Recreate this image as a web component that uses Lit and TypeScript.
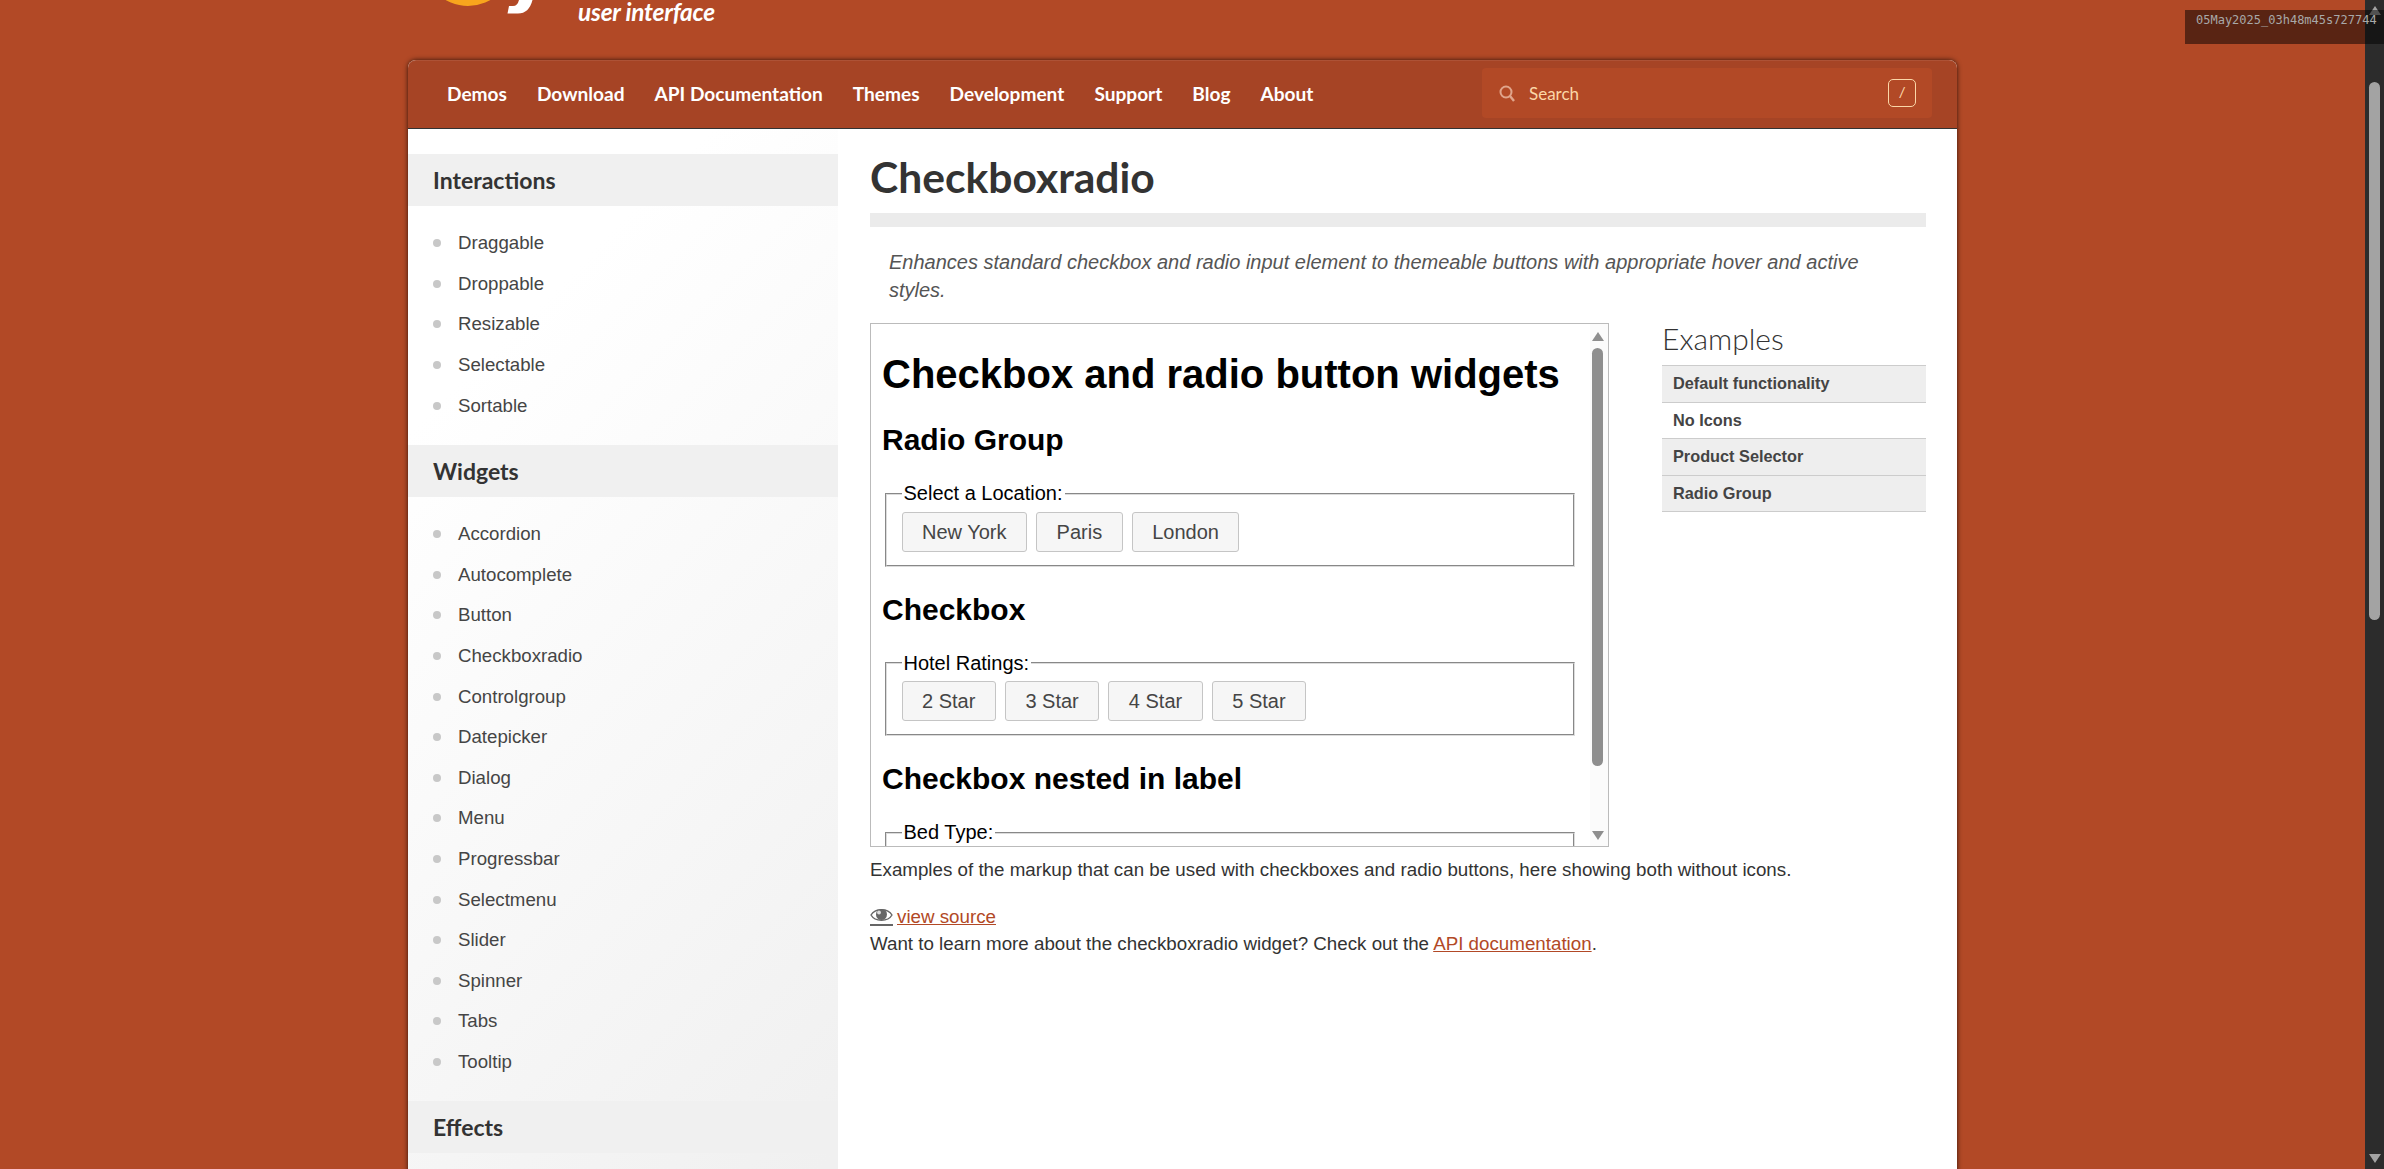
import { LitElement, html, css, svg } from "lit";
import { customElement } from "lit/decorators.js";

const NAV = ["Demos", "Download", "API Documentation", "Themes", "Development", "Support", "Blog", "About"];
const INTERACTIONS = ["Draggable", "Droppable", "Resizable", "Selectable", "Sortable"];
const WIDGETS = ["Accordion", "Autocomplete", "Button", "Checkboxradio", "Controlgroup", "Datepicker", "Dialog", "Menu", "Progressbar", "Selectmenu", "Slider", "Spinner", "Tabs", "Tooltip"];
const EXAMPLES = ["Default functionality", "No Icons", "Product Selector", "Radio Group"];

@customElement("app-root")
export class AppRoot extends LitElement {
  static styles = css`
    :host { display: block; height: 100vh; overflow: hidden; position: relative; background: #b24926; font-family: "Liberation Sans", Arial, sans-serif; }
    .shell { display: flex; height: 100vh; }
    .page { flex: 1; min-width: 0; height: 100vh; overflow: hidden; }
    .bar { width: 19px; flex: none; background: #2c2c2c; display: flex; flex-direction: column; align-items: center; }
    .thumb { width: 11px; height: 538px; margin-top: 67px; background: #a3a3a3; border-radius: 6px; }
    .arrow { width: 0; height: 0; border-left: 6.5px solid transparent; border-right: 6.5px solid transparent; }
    .arrow.up { border-bottom: 9px solid #a3a3a3; margin-top: 6px; }
    .arrow.down { border-top: 9px solid #a3a3a3; margin-top: auto; margin-bottom: 6px; }
    .stamp { position: absolute; left: 2185px; top: 10px; width: 199px; height: 34px; box-sizing: border-box; padding: 3px 0 0 11px; background: rgba(0,0,0,.5); color: #a8a8a8; font: 12px/15px "DejaVu Sans Mono", monospace; white-space: nowrap; overflow: hidden; }
    .logo { width: 1549px; height: 60px; margin: 0 auto; position: relative; overflow: hidden; }
    .logo svg { position: absolute; left: 0; top: 0; }
    .tag { position: absolute; left: 170px; top: 1px; color: #fff; font: italic 700 24.4px/21px "Lato", sans-serif; white-space: nowrap; letter-spacing: -.2px; }
    .wrap { width: 1549px; margin: 0 auto; box-shadow: 0 0 5px rgba(0,0,0,.75); border-radius: 8px 8px 0 0; background: #fff; height: 1200px; }
    nav { height: 68px; background: #a64425; border-radius: 8px 8px 0 0; border-bottom: 1px solid #333; display: flex; align-items: center; justify-content: space-between; padding: 0 25px 0 39px; box-shadow: inset 0 1px 0 rgba(255,255,255,.08); }
    .links { display: flex; gap: 30px; }
    .links a { color: #fff; font: 700 19.1px/24px "Lato", sans-serif; text-decoration: none; white-space: nowrap; }
    .search { width: 450px; height: 50px; margin-bottom: 2px; box-sizing: border-box; background: #b24926; border-radius: 4px; display: flex; align-items: center; padding: 0 16px; gap: 13px; color: #fbd7a8; font: 17px "Lato", sans-serif; }
    .search span.t { flex: 1; }
    .key { width: 28px; height: 28px; box-sizing: border-box; border: 1px solid #fbd7a8; border-radius: 5px; display: flex; align-items: center; justify-content: center; font: italic 14px "Liberation Sans", sans-serif; }
    .body { display: flex; }
    aside.side { width: 430px; flex: none; height: 1100px; padding-top: 25px; box-sizing: border-box; background: linear-gradient(135deg, #fff 20%, #f0f0f0 95%); }
    .side h2 { margin: 0; height: 52px; background: #f0f0f0; color: #333; padding-left: 25px; font: 700 23px/52px "Lato", sans-serif; }
    .side ul { list-style: none; margin: 0; padding: 17px 0 19px 25px; }
    .side li { display: flex; align-items: center; gap: 17px; height: 40.6px; color: #454545; font-size: 18.67px; }
    .side li::before { content: ""; width: 8px; height: 8px; border-radius: 50%; background: #c8c8c8; }
    main { width: 1056px; margin-left: 32px; }
    h1.title { margin: 0; height: 84px; border-bottom: 14px solid #ebebeb; color: #333; font: 700 42.6px/96px "Lato", sans-serif; }
    .desc { margin: 21px 0 19px; padding: 0 40px 0 19px; color: #555; font-style: italic; font-size: 20px; line-height: 28px; }
    .examples { float: right; width: 264px; }
    .examples h3 { margin: 0; height: 42px; color: #333; font: 300 30px/31px "Lato", sans-serif; }
    .examples a { display: block; padding: 0 0 0 11px; height: 35.5px; line-height: 35px; border-top: 1px solid #ccc; color: #444; font-weight: 700; font-size: 16.3px; background: #eee; text-decoration: none; }
    .examples a.plain { background: #fff; }
    .examples a:last-child { border-bottom: 1px solid #ccc; }
    .frame { width: 737px; height: 522px; border: 1px solid #bbb; display: flex; overflow: hidden; background: #fff; }
    .doc { flex: 1; min-width: 0; padding: 0 10px 0 11px; color: #000; font-size: 20px; overflow: hidden; }
    .doc h1 { font-size: 40px; line-height: 46px; margin: 27px 0 0; }
    .doc h2 { font-size: 30px; line-height: 34px; margin: 26px 0 0; }
    .doc fieldset { margin: 25px 5px 0 3px; padding: 6.5px 14.5px 13px; border: 2px groove #dcdcdc; min-inline-size: auto; }
    .doc fieldset.clip { height: 60px; }
    .doc legend { padding: 0 2px; line-height: 23px; }
    .doc .btn { display: inline-block; box-sizing: border-box; height: 40px; line-height: 38px; padding: 0 19.5px; margin-right: 3.5px; background: #f6f6f6; border: 1px solid #c5c5c5; border-radius: 3px; color: #454545; }
    .sb { width: 15px; padding-right: 3px; flex: none; background: #fbfbfb; display: flex; flex-direction: column; align-items: center; }
    .sb .thumb2 { width: 11px; height: 418px; margin-top: 7px; background: #8e8e8e; border-radius: 6px; }
    .sb .arrow.up { border-bottom-color: #8e8e8e; margin-top: 8px; }
    .sb .arrow.down { border-top-color: #8e8e8e; margin-bottom: 6px; }
    .note { margin: 12px 0 0; color: #333; font-size: 18.75px; line-height: 21px; }
    .note a, .src a, .learn a { color: #b24926; }
    .src { margin: 23.5px 0 0; color: #333; font-size: 18.75px; line-height: 26px; display: flex; align-items: center; gap: 4px; }
    .src svg { flex: none; }
    .learn { margin: 0.5px 0 0; color: #333; font-size: 18.75px; line-height: 28px; }
  `;

  private eye() {
    return html`<svg width="23" height="20" viewBox="0 0 23 20" aria-hidden="true">
      ${svg`<path d="M1 8C5 1 18 1 22 8C18 15 5 15 1 8Z" fill="#fff" stroke="#666" stroke-width="1.4"/>
      <circle cx="11.5" cy="7.5" r="5.5" fill="#666"/><circle cx="9" cy="5.5" r="1.9" fill="#ddd"/>
      <rect x="0" y="17" width="23" height="2" fill="#666"/>`}
    </svg>`;
  }

  private field(legend: string, items: string[], clip = false) {
    return html`<fieldset class=${clip ? "clip" : ""}><legend>${legend}</legend>${items.map((t) => html`<span class="btn">${t}</span> `)}</fieldset>`;
  }

  render() {
    return html`
      <div class="shell">
        <div class="page">
          <div class="logo">
            <svg width="160" height="30" viewBox="0 0 160 30" aria-hidden="true">
              ${svg`<circle cx="60" cy="-39" r="45" fill="#f8a51d"/>
              <path d="M111 0L124.5 0Q121 13.5 110 13.5L99.5 13.5L101 6L105 6Q109.5 6 111 0Z" fill="#fff"/>`}
            </svg>
            <span class="tag">user interface</span>
          </div>
          <div class="wrap">
            <nav>
              <div class="links">${NAV.map((n) => html`<a href="#">${n}</a>`)}</div>
              <div class="search">
                <svg width="18" height="18" viewBox="0 0 18 18" aria-hidden="true">
                  ${svg`<circle cx="8" cy="8" r="5.5" fill="none" stroke="#e0a58c" stroke-width="2"/><path d="M12 12l4 5" stroke="#e0a58c" stroke-width="2.4"/>`}
                </svg>
                <span class="t">Search</span>
                <span class="key">/</span>
              </div>
            </nav>
            <div class="body">
              <aside class="side">
                <h2>Interactions</h2>
                <ul>${INTERACTIONS.map((i) => html`<li>${i}</li>`)}</ul>
                <h2>Widgets</h2>
                <ul>${WIDGETS.map((i) => html`<li>${i}</li>`)}</ul>
                <h2>Effects</h2>
              </aside>
              <main>
                <h1 class="title">Checkboxradio</h1>
                <p class="desc">Enhances standard checkbox and radio input element to themeable buttons with appropriate hover and active styles.</p>
                <div class="examples">
                  <h3>Examples</h3>
                  ${EXAMPLES.map((e, i) => html`<a href="#" class=${i === 1 ? "plain" : ""}>${e}</a>`)}
                </div>
                <div class="frame">
                  <div class="doc">
                    <h1>Checkbox and radio button widgets</h1>
                    <h2>Radio Group</h2>
                    ${this.field("Select a Location:", ["New York", "Paris", "London"])}
                    <h2>Checkbox</h2>
                    ${this.field("Hotel Ratings:", ["2 Star", "3 Star", "4 Star", "5 Star"])}
                    <h2>Checkbox nested in label</h2>
                    ${this.field("Bed Type:", [], true)}
                  </div>
                  <div class="sb"><span class="arrow up"></span><span class="thumb2"></span><span class="arrow down"></span></div>
                </div>
                <p class="note">Examples of the markup that can be used with checkboxes and radio buttons, here showing both without icons.</p>
                <div class="src">${this.eye()}<a href="#">view source</a></div>
                <p class="learn">Want to learn more about the checkboxradio widget? Check out the <a href="#">API documentation</a>.</p>
              </main>
            </div>
          </div>
        </div>
        <div class="bar"><span class="arrow up"></span><span class="thumb"></span><span class="arrow down"></span></div>
      </div>
      <div class="stamp">05May2025_03h48m45s727744</div>
    `;
  }
}
